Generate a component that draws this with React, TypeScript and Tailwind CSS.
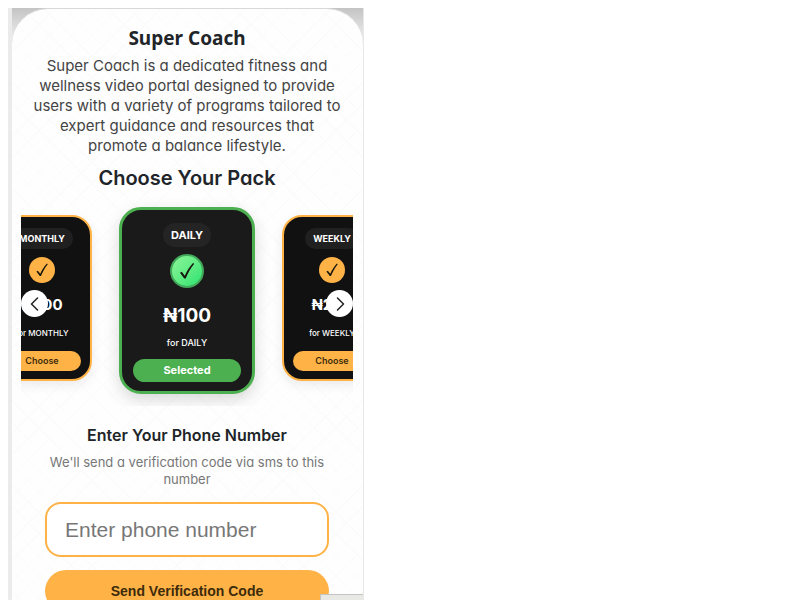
import { useState } from 'react';

type Pack = {
  name: string;
  price: string;
};

const packs: Pack[] = [
  { name: 'MONTHLY', price: '₦500' },
  { name: 'DAILY', price: '₦100' },
  { name: 'WEEKLY', price: '₦200' },
];

function CheckMark({ className }: { className: string }) {
  return (
    <svg viewBox="0 0 20 20" className={className} aria-hidden="true">
      <path d="M3 11.8 L4.8 10.8 L7.8 14.8 C9.8 10 12.5 6 16 2 L17.2 2.8 C13.5 7.5 11 12 8.7 17.6 L7.2 17.6 Z" fill="#16180f" />
    </svg>
  );
}

function Chevron({ points }: { points: string }) {
  return (
    <svg viewBox="0 0 16 16" className="h-4 w-4" fill="none" stroke="currentColor" strokeWidth="1.5" aria-hidden="true">
      <polyline points={points} strokeLinecap="round" strokeLinejoin="round" />
    </svg>
  );
}

function PackCard({ pack, selected, onChoose }: { pack: Pack; selected: boolean; onChoose: () => void }) {
  if (selected) {
    return (
      <div className="flex h-[187px] w-[136px] shrink-0 flex-col items-center rounded-[22px] border-3 border-[#4caf50] bg-[#1a1a1a] px-[11px] pt-[13px] text-white shadow-[0_6px_16px_rgba(0,0,0,0.15)]">
        <h3 className="rounded-full bg-[#242424] px-2 text-[11px] leading-[24px] font-bold">{pack.name}</h3>
        <div className="mt-[7px] flex h-[34px] w-[34px] shrink-0 items-center justify-center rounded-full border-2 border-[#43a85a] bg-linear-to-br from-[#8af59a] to-[#19e36f]">
          <CheckMark className="h-5 w-5" />
        </div>
        <p className="mt-[15px] text-[19px] leading-[26px] font-bold">{pack.price}</p>
        <p className="mt-[7px] text-[9px] leading-[14px] font-medium">for {pack.name}</p>
        <button type="button" className="mt-[9px] h-[23px] w-full shrink-0 rounded-full bg-[#4caf50] text-[11px] font-bold">
          Selected
        </button>
      </div>
    );
  }

  return (
    <div className="mb-1 flex h-[166px] w-[100px] shrink-0 flex-col items-center rounded-[20px] border-2 border-[#ffb347] bg-[#111111] px-[9px] pt-[11px] text-white shadow-[0_4px_12px_rgba(0,0,0,0.08)]">
      <h3 className="rounded-full bg-[#202020] px-2 text-[9px] leading-[21px] font-bold">{pack.name}</h3>
      <div className="mt-[8px] flex h-[26px] w-[26px] shrink-0 items-center justify-center rounded-full bg-[#ffb347]">
        <CheckMark className="h-4 w-4" />
      </div>
      <p className="mt-[11px] text-[15px] leading-[22px] font-bold">{pack.price}</p>
      <p className="mt-[11px] text-[8px] leading-[12px] font-medium">for {pack.name}</p>
      <button
        type="button"
        onClick={onChoose}
        className="mt-[12px] h-[20px] w-full shrink-0 rounded-full bg-[#ffb347] text-[9px] font-semibold text-[#3d2b0b]"
      >
        Choose
      </button>
    </div>
  );
}

function App() {
  const [current, setCurrent] = useState(1);
  const [phone, setPhone] = useState('');

  // The chosen pack always sits in the middle of the carousel
  const count = packs.length;
  const visible = [(current + count - 1) % count, current, (current + 1) % count];

  const move = (step: number) => setCurrent((current + step + count) % count);

  return (
    <div className="h-screen overflow-hidden bg-white pt-2 pl-2 font-['Inter','Noto_Sans',sans-serif] text-[#212529] [font-feature-settings:'cv11']">
      <div className="relative h-full w-full max-w-[356px] border-r border-[#e8e8e8] border-l-4 border-l-[#ebebeb] bg-linear-to-b from-[#c4c4c4] to-[#f4f4f4] to-[36px]">
        <main className="flex min-h-full flex-col items-center rounded-t-[36px] border-t border-[#d8d8d8] bg-[#fefefe] bg-[repeating-linear-gradient(45deg,transparent_0_14px,#fbfbfb_14px_15px),repeating-linear-gradient(-45deg,transparent_0_14px,#fbfbfb_14px_15px)] pt-[16px] pr-[10px] pl-[9px] text-center">
          <h1 className="font-['Noto_Sans',sans-serif] text-[19px] leading-[26px] font-bold">Super Coach</h1>
          <p className="mt-[5px] px-[10px] text-[15px] leading-[20px] text-[#444444]">
            Super Coach is a dedicated fitness and wellness video portal designed to provide users with a variety of
            programs tailored to expert guidance and resources that promote a balance lifestyle.
          </p>
          <h2 className="mt-[8px] text-[20px] leading-[28px] font-semibold">Choose Your Pack</h2>

          <section aria-label="Packs" className="relative mt-[2px] w-full overflow-hidden">
            <div className="flex h-[212px] items-center justify-center gap-[27px]">
              {visible.map((index) => (
                <PackCard
                  key={packs[index].name}
                  pack={packs[index]}
                  selected={index === current}
                  onChoose={() => setCurrent(index)}
                />
              ))}
            </div>
            <button
              type="button"
              aria-label="Previous pack"
              onClick={() => move(-1)}
              className="absolute top-[96px] left-0 flex h-[27px] w-[27px] items-center justify-center rounded-full bg-white text-[#222222]"
            >
              <Chevron points="10.5,2 4.5,8 10.5,14" />
            </button>
            <button
              type="button"
              aria-label="Next pack"
              onClick={() => move(1)}
              className="absolute top-[96px] right-0 flex h-[27px] w-[27px] items-center justify-center rounded-full bg-white text-[#222222]"
            >
              <Chevron points="5.5,2 11.5,8 5.5,14" />
            </button>
          </section>

          <form className="flex w-full flex-col px-6" onSubmit={(e) => e.preventDefault()}>
            <label htmlFor="phone" className="mt-[17px] text-[16px] leading-[24px] font-semibold">
              Enter Your Phone Number
            </label>
            <p className="mt-[7px] text-[13px] leading-[17px] text-[#777777]">
              We'll send a verification code via sms to this number
            </p>
            <input
              id="phone"
              type="tel"
              value={phone}
              onChange={(e) => setPhone(e.target.value)}
              placeholder="Enter phone number"
              className="mt-[14px] h-[55px] w-full rounded-[16px] border-2 border-[#ffb347] bg-white px-[18px] font-['Liberation_Sans',sans-serif] text-[21px] placeholder:text-[#777777]"
            />
            <button
              type="submit"
              className="mt-[13px] h-[42px] w-full rounded-full bg-[#ffb347] font-['Liberation_Sans',sans-serif] text-[14px] font-bold text-[#3d2b0b]"
            >
              Send Verification Code
            </button>
          </form>
        </main>
        <div className="absolute right-0 bottom-0 h-[6px] w-[43px] border-t border-l border-[#c4c4c4] bg-[#e8e8e4]" />
      </div>
    </div>
  );
}

export default App;
